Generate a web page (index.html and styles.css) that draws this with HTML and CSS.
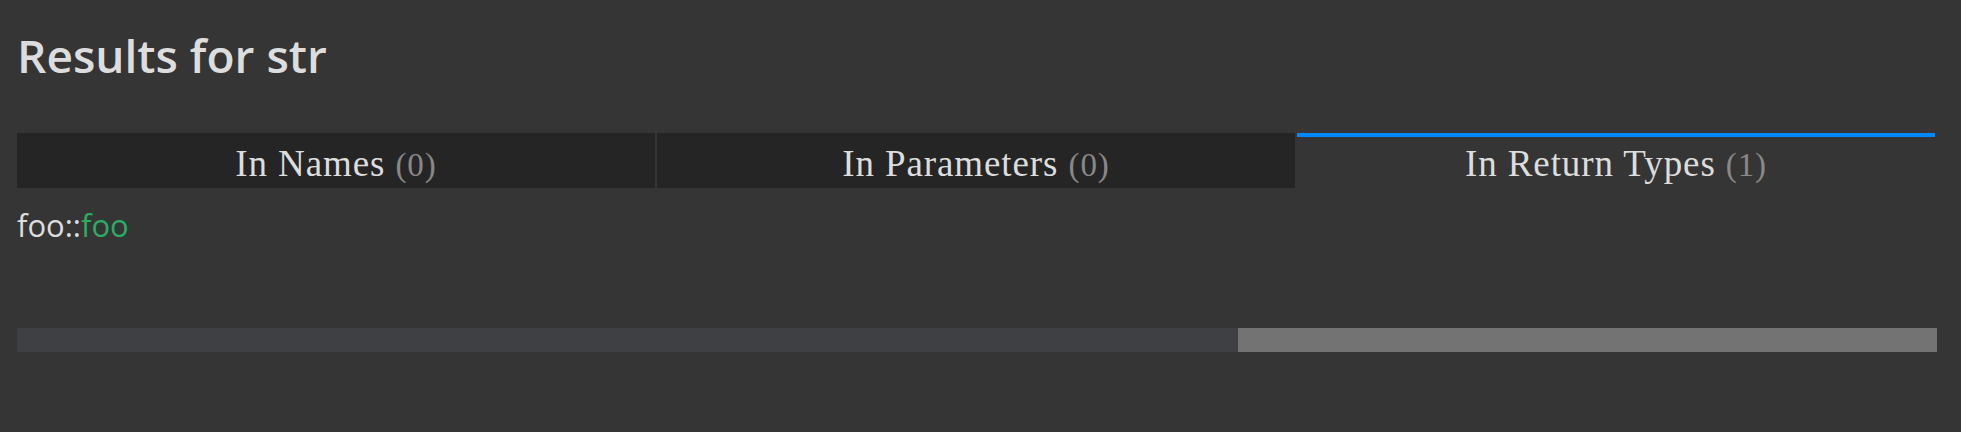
FILE: index.html
```html
<!DOCTYPE html>
<html lang="en">
<head>
<meta charset="utf-8">
<title>Results for str</title>
<link rel="stylesheet" href="styles.css">
</head>
<body>
  <h1 class="title">Results for str</h1>
  <div class="tabs">
    <button class="tab">In Names <span class="count">(0)</span></button>
    <button class="tab">In Parameters <span class="count">(0)</span></button>
    <button class="tab selected">In Return Types <span class="count">(1)</span></button>
  </div>
  <div class="results">
    <div class="result"><span class="path">foo::</span><span class="fn">foo</span></div>
  </div>
  <div class="scrollbar">
    <div class="track"></div>
    <div class="thumb"></div>
  </div>
</body>
</html>
```

FILE: styles.css
```css
html, body {
  background: #353535;
}
body {
  margin: 0;
  padding: 27px 24px 0 17px;
  color: #dddddd;
  font-family: "Open Sans", "Noto Sans", sans-serif;
}
.title {
  margin: 0;
  font-size: 46px;
  line-height: 56px;
  height: 56px;
  font-weight: 600;
  color: #dddddd;
}
.tabs {
  margin: 50px 2px 0 0;
  display: flex;
  gap: 2px;
}
.tab {
  flex: 1 1 0;
  margin: 0;
  padding: 3px 0 0 0;
  border: 0;
  border-top: 4px solid #252525;
  background: #252525;
  color: #dddddd;
  font-family: "Liberation Serif", "DejaVu Serif", serif;
  font-size: 37px;
  line-height: 48px;
  height: 55px;
  letter-spacing: 0.9px;
  text-align: center;
  box-sizing: border-box;
}
.tab.selected {
  background: #353535;
  border-top-color: #0089ff;
}
.count {
  font-size: 33px;
  color: #888888;
}
.results {
  margin-top: 15px;
}
.result {
  font-size: 31px;
  line-height: 44px;
  height: 44px;
}
.path {
  color: #dddddd;
}
.fn {
  color: #2bab63;
}
.scrollbar {
  margin-top: 81px;
  display: flex;
  height: 24px;
}
.track {
  flex: 1;
  background: #3f4043;
}
.thumb {
  width: 699px;
  background: #737373;
}
```
